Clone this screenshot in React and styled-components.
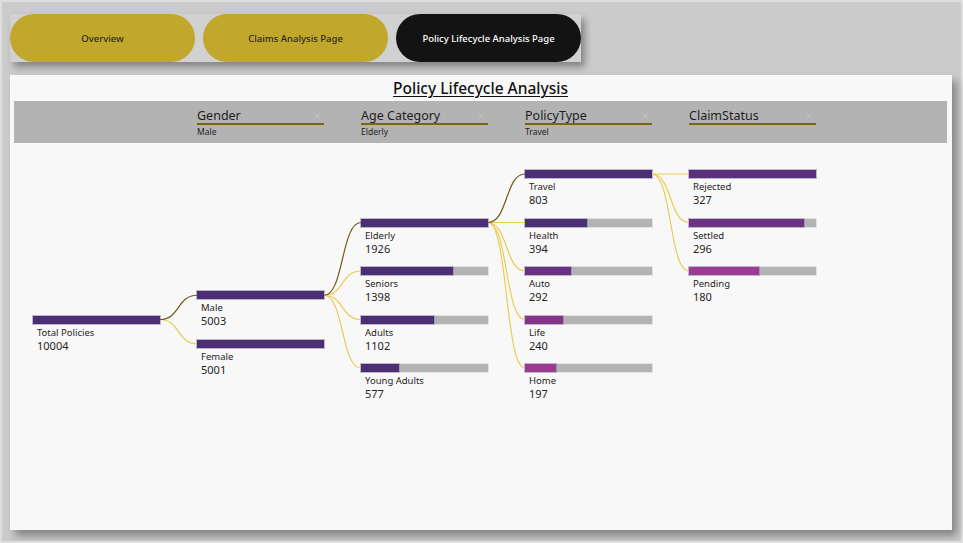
import React from 'react'
import styled, { createGlobalStyle } from 'styled-components'

const FONT = '"Noto Sans", "Open Sans", sans-serif'

const GlobalStyle = createGlobalStyle`
  html, body {
    margin: 0;
    padding: 0;
    background: #dedede;
  }
  body {
    font-family: ${FONT};
    color: #252423;
  }
`

const Page = styled.div`
  width: 959px;
  height: 539px;
  margin: 2px 0 0 2px;
  background: #cbcbcb;
  padding: 12px 0 0 8px;
  box-sizing: border-box;
  display: flex;
  flex-direction: column;
  gap: 13px;
`

const NavBar = styled.nav`
  display: flex;
  gap: 8px;
  width: max-content;
  background: #d1d1d1;
  box-shadow: 4px 5px 7px rgba(0, 0, 0, 0.35);
`

const NavButton = styled.div`
  width: 185px;
  height: 48px;
  border-radius: 24px;
  display: flex;
  align-items: center;
  justify-content: center;
  font-size: 9.5px;
  font-weight: 500;
  background: ${props => (props.active ? '#131313' : '#c2a72d')};
  color: ${props => (props.active ? '#ffffff' : '#2d2a20')};
`

const Card = styled.section`
  width: 942px;
  height: 455px;
  background: #f8f8f8;
  box-shadow: 5px 6px 8px rgba(0, 0, 0, 0.35);
  padding: 0 5px 0 4px;
  box-sizing: border-box;
  display: flex;
  flex-direction: column;
`

const Title = styled.h1`
  margin: 0;
  height: 26px;
  display: flex;
  align-items: center;
  justify-content: center;
  font-size: 15.5px;
  font-weight: 500;
  text-decoration: underline;
  text-underline-offset: 2px;
  text-decoration-thickness: 1px;
  color: #111;
`

const FilterBar = styled.div`
  height: 42px;
  background: #b3b3b3;
  display: grid;
  grid-template-columns: repeat(5, 127px);
  column-gap: 37px;
  padding: 7px 0 0 19px;
  box-sizing: border-box;
`

const Filter = styled.div`
  display: flex;
  flex-direction: column;
`

const FilterHead = styled.div`
  display: flex;
  justify-content: space-between;
  align-items: center;
  height: 15px;
  font-size: 12.5px;
  color: #1e1e1e;
  border-bottom: 2px solid #7b6510;
`

const Clear = styled.span`
  font-family: "DejaVu Sans", sans-serif;
  font-size: 12px;
  font-weight: 300;
  line-height: 12px;
  color: #c4c4c4;
  margin-right: 2px;
`

const FilterValue = styled.div`
  font-size: 8.5px;
  line-height: 12px;
  padding-top: 1px;
  color: #1e1e1e;
`

const ROW = 24.25
const COL = 164
const BAR_W = 127
const PAD_X = 19
const PAD_Y = 27

const Tree = styled.div`
  position: relative;
  display: grid;
  grid-template-columns: repeat(5, ${BAR_W}px);
  grid-template-rows: repeat(11, ${ROW}px);
  column-gap: ${COL - BAR_W}px;
  padding: ${PAD_Y}px 0 0 ${PAD_X}px;
`

const Links = styled.svg`
  position: absolute;
  left: 0;
  top: 0;
  width: 100%;
  height: 100%;
  overflow: visible;
  pointer-events: none;
`

const Node = styled.div`
  display: flex;
  flex-direction: column;
`

const Track = styled.div`
  height: 8px;
  background: #b3b3b3;
  box-shadow: 0 0 0 1px rgba(190, 190, 200, 0.35);
  display: flex;
`

const Fill = styled.div`
  height: 100%;
  background: ${props => props.color};
  box-shadow: 0 0 0 1px rgba(120, 100, 150, 0.35);
`

const NodeLabel = styled.div`
  margin: 3px 0 0 4px;
  font-size: 9.5px;
  line-height: 12px;
`

const NodeValue = styled.div`
  margin-left: 4px;
  font-size: 11px;
  line-height: 13px;
`

const PURPLE = '#4b2e73'

// level, half-row, label, value, ratio of max sibling, colour
const nodes = [
  { id: 'total', level: 0, row: 6, label: 'Total Policies', value: 10004, ratio: 1, color: PURPLE },
  { id: 'male', parent: 'total', level: 1, row: 5, label: 'Male', value: 5003, ratio: 1, color: PURPLE, on: true },
  { id: 'female', parent: 'total', level: 1, row: 7, label: 'Female', value: 5001, ratio: 5001 / 5003, color: PURPLE },
  { id: 'elderly', parent: 'male', level: 2, row: 2, label: 'Elderly', value: 1926, ratio: 1, color: PURPLE, on: true },
  { id: 'seniors', parent: 'male', level: 2, row: 4, label: 'Seniors', value: 1398, ratio: 1398 / 1926, color: PURPLE },
  { id: 'adults', parent: 'male', level: 2, row: 6, label: 'Adults', value: 1102, ratio: 1102 / 1926, color: PURPLE },
  { id: 'young', parent: 'male', level: 2, row: 8, label: 'Young Adults', value: 577, ratio: 577 / 1926, color: PURPLE },
  { id: 'travel', parent: 'elderly', level: 3, row: 0, label: 'Travel', value: 803, ratio: 1, color: PURPLE, on: true },
  { id: 'health', parent: 'elderly', level: 3, row: 2, label: 'Health', value: 394, ratio: 394 / 803, color: PURPLE },
  { id: 'auto', parent: 'elderly', level: 3, row: 4, label: 'Auto', value: 292, ratio: 292 / 803, color: '#683184' },
  { id: 'life', parent: 'elderly', level: 3, row: 6, label: 'Life', value: 240, ratio: 240 / 803, color: '#843588' },
  { id: 'home', parent: 'elderly', level: 3, row: 8, label: 'Home', value: 197, ratio: 197 / 803, color: '#9a3a91' },
  { id: 'rejected', parent: 'travel', level: 4, row: 0, label: 'Rejected', value: 327, ratio: 1, color: '#5a307c' },
  { id: 'settled', parent: 'travel', level: 4, row: 2, label: 'Settled', value: 296, ratio: 296 / 327, color: '#6d3285' },
  { id: 'pending', parent: 'travel', level: 4, row: 4, label: 'Pending', value: 180, ratio: 180 / 327, color: '#9c3b93' },
]

const filters = [
  { title: 'Gender', value: 'Male' },
  { title: 'Age Category', value: 'Elderly' },
  { title: 'PolicyType', value: 'Travel' },
  { title: 'ClaimStatus', value: '' },
]

const barY = row => PAD_Y + row * ROW + 4

const linkPath = (parent, child) => {
  const x1 = PAD_X + parent.level * COL + BAR_W
  const y1 = barY(parent.row)
  const x2 = PAD_X + child.level * COL
  const y2 = barY(child.row)
  return `M${x1} ${y1} C${x1 + 20} ${y1}, ${x2 - 20} ${y2}, ${x2} ${y2}`
}

const byId = Object.fromEntries(nodes.map(n => [n.id, n]))

const App = () => (
  <Page>
    <GlobalStyle />
    <NavBar>
      <NavButton>Overview</NavButton>
      <NavButton>Claims Analysis Page</NavButton>
      <NavButton active>Policy Lifecycle Analysis Page</NavButton>
    </NavBar>
    <Card>
      <Title>Policy Lifecycle Analysis</Title>
      <FilterBar>
        <div />
        {filters.map(f => (
          <Filter key={f.title}>
            <FilterHead>
              {f.title}
              <Clear>×</Clear>
            </FilterHead>
            <FilterValue>{f.value}</FilterValue>
          </Filter>
        ))}
      </FilterBar>
      <Tree>
        <Links>
          {nodes.filter(n => n.parent).sort((a, b) => (a.on ? 1 : 0) - (b.on ? 1 : 0)).map(n => (
            <path
              key={n.id}
              d={linkPath(byId[n.parent], n)}
              fill="none"
              stroke={n.on ? '#6e5a14' : '#ebcb55'}
              strokeWidth="1.2"
            />
          ))}
        </Links>
        {nodes.map(n => (
          <Node
            key={n.id}
            style={{ gridColumn: n.level + 1, gridRow: `${n.row + 1} / span 2` }}
          >
            <Track>
              <Fill color={n.color} style={{ width: `${n.ratio * 100}%` }} />
            </Track>
            <NodeLabel>{n.label}</NodeLabel>
            <NodeValue>{n.value}</NodeValue>
          </Node>
        ))}
      </Tree>
    </Card>
  </Page>
)

export default App
